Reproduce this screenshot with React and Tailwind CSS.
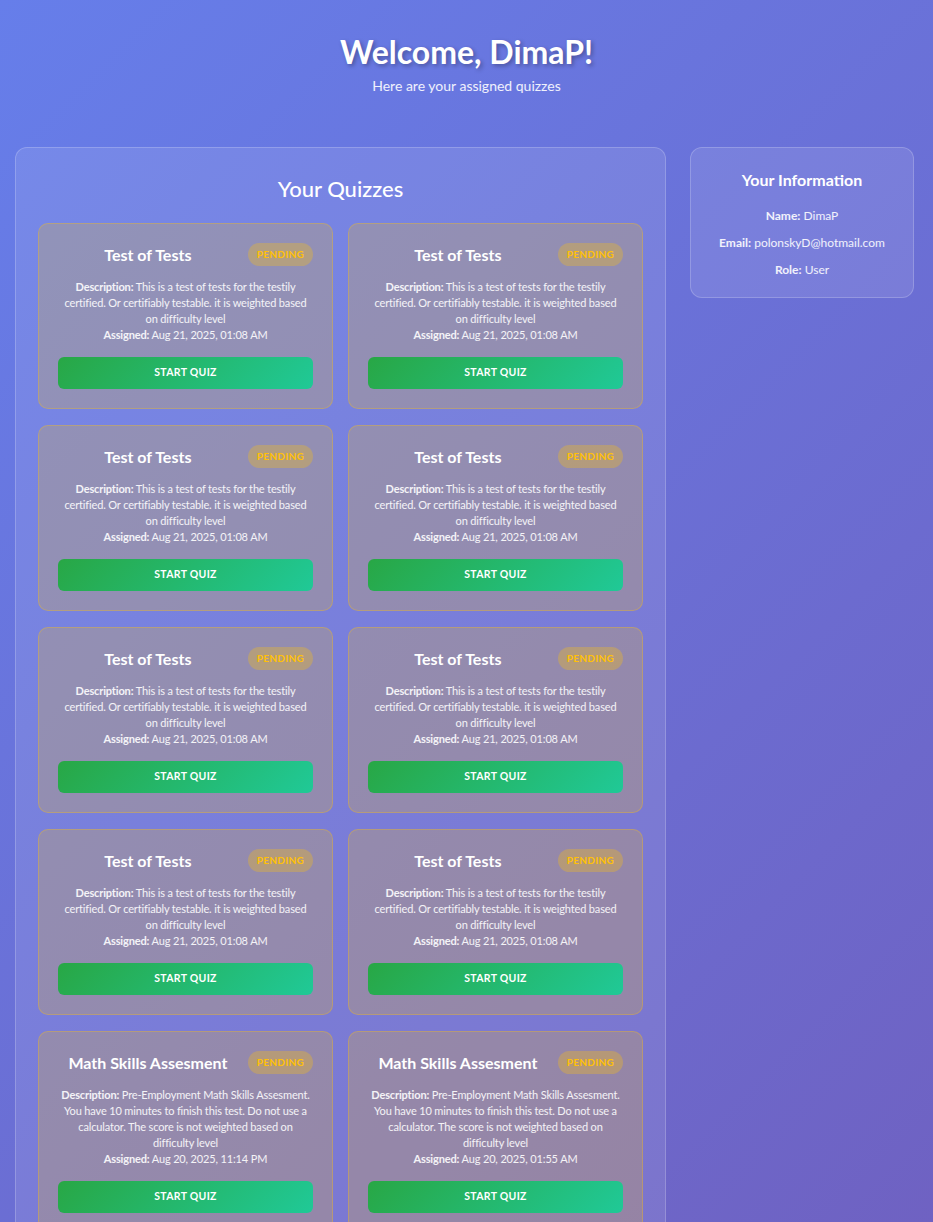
import React from 'react';

const testQuiz = {
    title: 'Test of Tests',
    description: 'This is a test of tests for the testily certified. Or certifiably testable. it is weighted based on difficulty level',
    assigned: 'Aug 21, 2025, 01:08 AM',
};

const quizzes = [
    ...Array.from({ length: 8 }, () => testQuiz),
    {
        title: 'Math Skills Assesment',
        description: 'Pre-Employment Math Skills Assesment. You have 10 minutes to finish this test. Do not use a calculator. The score is not weighted based on difficulty level',
        assigned: 'Aug 20, 2025, 11:14 PM',
    },
    {
        title: 'Math Skills Assesment',
        description: 'Pre-Employment Math Skills Assesment. You have 10 minutes to finish this test. Do not use a calculator. The score is not weighted based on difficulty level',
        assigned: 'Aug 20, 2025, 01:55 AM',
    },
];

const QuizCard = ({ quiz }) => (
    <div className="rounded-[10px] border border-[#ffc107]/30 bg-[#ffc107]/20 px-[19px] pt-[19px] pb-[19px]">
        <div className="flex items-center gap-[10px]">
            <h3 className="flex-1 text-center text-[16px] font-bold leading-[23px] text-white">{quiz.title}</h3>
            <span className="rounded-full bg-[#ffc107]/30 px-[9px] text-[10px] font-bold uppercase leading-[23px] tracking-[0.3px] text-[#ffc107]">
                Pending
            </span>
        </div>
        <div className="mt-[13px] text-center text-[11px] leading-[16px] tracking-[-0.15px] text-white/90">
            <p>
                <strong className="font-bold">Description:</strong> {quiz.description}
            </p>
            <p>
                <strong className="font-bold">Assigned:</strong> {quiz.assigned}
            </p>
        </div>
        <button className="mt-[14px] h-8 w-full rounded-md bg-[linear-gradient(135deg,#28a745,#20c997)] text-[10.5px] font-bold uppercase tracking-[0.3px] text-white">
            Start Quiz
        </button>
    </div>
);

const App = () => {
    return (
        <div
            className="min-h-screen bg-[linear-gradient(135deg,#667eea_0%,#764ba2_180%)] bg-fixed pb-10 text-white"
            style={{ fontFamily: 'Lato, "Open Sans", sans-serif' }}
        >
            {/* Header */}
            <div className="pt-[29px] pb-[51px] text-center">
                <h1 className="text-[32px] font-bold leading-[46px] [text-shadow:2px_2px_4px_rgba(0,0,0,0.3)]">Welcome, DimaP!</h1>
                <p className="mt-[1px] text-[14px] leading-[20px] text-white/90">Here are your assigned quizzes</p>
            </div>

            <div className="grid grid-cols-[1fr_224px] items-start gap-6 pl-[15px] pr-[19px]">
                {/* Quizzes */}
                <div className="rounded-xl border border-white/20 bg-white/10 px-[22px] pt-[26px] pb-6">
                    <h2 className="mb-[19px] text-center text-[22px] font-medium leading-[30px]">Your Quizzes</h2>
                    <div className="grid grid-cols-2 gap-x-[15px] gap-y-4">
                        {quizzes.map((quiz, i) => (
                            <QuizCard key={i} quiz={quiz} />
                        ))}
                    </div>
                </div>

                {/* User info */}
                <div className="rounded-xl border border-white/20 bg-white/10 px-4 pt-[20px] pb-[19px] text-center">
                    <h3 className="mb-4 text-[16px] font-bold leading-[24px]">Your Information</h3>
                    <div className="space-y-[11px] text-[12px] leading-[16px] text-white/90">
                        <p><strong className="font-bold">Name:</strong> DimaP</p>
                        <p><strong className="font-bold">Email:</strong> polonskyD@hotmail.com</p>
                        <p><strong className="font-bold">Role:</strong> User</p>
                    </div>
                </div>
            </div>
        </div>
    );
};

export default App;
